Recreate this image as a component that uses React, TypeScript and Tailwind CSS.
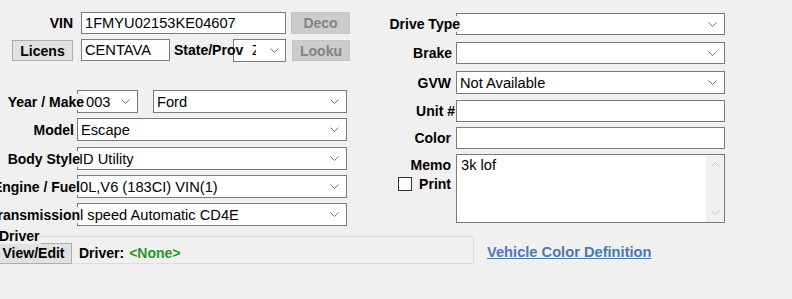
import React from "react";

const Chevron = (props: { up?: boolean; color?: string }) => (
  <svg width="9" height="5" viewBox="0 0 9 5" className="shrink-0">
    <polyline
      points={props.up ? "0.5,4.5 4.5,0.5 8.5,4.5" : "0.5,0.5 4.5,4.5 8.5,0.5"}
      fill="none"
      stroke={props.color || "#707070"}
      strokeWidth="1"
    />
  </svg>
);

const Select = (props: { text?: string; className: string; pad?: string }) => (
  <div
    className={`flex items-center bg-white border border-[#7a7a7a] ${props.className}`}
  >
    <span className={`flex-1 whitespace-nowrap overflow-hidden text-black ${props.pad || "pl-[3px]"}`}>
      {props.text}
    </span>
    <span className="pr-[7px] flex items-center">
      <Chevron />
    </span>
  </div>
);

const Field = (props: { text?: string; className: string }) => (
  <div
    className={`flex items-center bg-white border border-[#7a7a7a] pl-[3px] whitespace-nowrap overflow-hidden ${props.className}`}
  >
    {props.text}
  </div>
);

const Label = (props: { text: string; className: string }) => (
  <div
    className={`relative z-10 flex justify-end overflow-hidden whitespace-nowrap font-bold text-[14px] h-[16px] leading-[16px] ${props.className}`}
  >
    <span className="bg-[#f0f0f0]">{props.text}</span>
  </div>
);

export default function App() {
  return (
    <div className="w-[792px] h-[299px] bg-[#f0f0f0] overflow-hidden text-[14.67px] text-black font-['Liberation_Sans',Arial,sans-serif]">
      <div className="flex">
        {/* left column */}
        <div className="w-[352px] pt-[12px]">
          <div className="flex items-center h-[22px]">
            <Label text="VIN" className="w-[73px]" />
            <Field text="1FMYU02153KE04607" className="ml-[8px] w-[205px] h-[22px]" />
            <button className="ml-[5px] w-[59px] h-[22px] bg-[#cccccc] border border-[#c4c4c4] font-bold text-[14px] text-[#838383]">
              Deco
            </button>
          </div>
          <div className="flex items-center mt-[5px] h-[22px]">
            <button className="ml-[12px] w-[61px] h-[21px] bg-[#e1e1e1] border border-[#adadad] font-bold text-[14px]">
              Licens
            </button>
            <Field text="CENTAVA" className="ml-[8px] w-[89px] h-[22px]" />
            <div className="relative z-10 ml-[4px] w-[59px] font-bold text-[14px] whitespace-nowrap h-[16px] leading-[16px]">
              State/Prov
            </div>
            <div className="flex items-center bg-white border border-[#7a7a7a] w-[53px] h-[23px]">
              <span className="ml-[18px] w-[4px] overflow-hidden">Z</span>
              <span className="ml-auto pr-[6px] flex items-center">
                <Chevron />
              </span>
            </div>
            <button className="ml-[6px] w-[58px] h-[21px] bg-[#cccccc] border border-[#c4c4c4] font-bold text-[14px] text-[#838383]">
              Looku
            </button>
          </div>

          <div className="flex items-center mt-[29px] h-[23px]">
            <Label text="Year / Make" className="w-[84px]" />
            <Select text="003" className="-ml-[7px] w-[61px] h-[23px]" pad="pl-[8px]" />
            <Select text="Ford" className="ml-[15px] w-[194px] h-[23px]" />
          </div>
          <div className="flex items-center mt-[5px] h-[23px]">
            <Label text="Model" className="w-[74px]" />
            <Select text="Escape" className="ml-[3px] w-[270px] h-[23px]" />
          </div>
          <div className="flex items-center mt-[6px] h-[23px]">
            <Label text="Body Style" className="w-[80px]" />
            <Select text="ID Utility" className="-ml-[3px] w-[270px] h-[23px]" pad="pl-[1px]" />
          </div>
          <div className="flex items-center mt-[5px] h-[23px]">
            <Label text="Engine / Fuel" className="w-[80px]" />
            <Select text="0L,V6 (183CI) VIN(1)" className="-ml-[3px] w-[270px] h-[23px]" pad="pl-[2px]" />
          </div>
          <div className="flex items-center mt-[5px] h-[23px]">
            <Label text="Transmission" className="w-[80px]" />
            <Select text="l speed Automatic CD4E" className="-ml-[3px] w-[270px] h-[23px]" pad="pl-[2px]" />
          </div>
        </div>

        {/* right column */}
        <div className="ml-[33px] w-[340px] pt-[13px]">
          <div className="flex items-center h-[22px]">
            <Label text="Drive Type" className="w-[75px]" />
            <Select className="-ml-[4px] w-[269px] h-[22px]" />
          </div>
          <div className="flex items-center mt-[7px] h-[22px]">
            <Label text="Brake" className="w-[67px]" />
            <Select className="ml-[4px] w-[269px] h-[22px]" />
          </div>
          <div className="flex items-center mt-[7px] h-[23px]">
            <Label text="GVW" className="w-[66px]" />
            <Select text="Not Available" className="ml-[5px] w-[269px] h-[23px]" />
          </div>
          <div className="flex items-center mt-[6px] h-[22px]">
            <Label text="Unit #" className="w-[70px]" />
            <Field className="ml-[1px] w-[269px] h-[22px]" />
          </div>
          <div className="flex items-center mt-[5px] h-[22px]">
            <Label text="Color" className="w-[66px]" />
            <Field className="ml-[5px] w-[269px] h-[22px]" />
          </div>
          <div className="flex mt-[5px] h-[69px]">
            <div className="w-[66px] flex flex-col items-end pt-[3px] text-[14px]">
              <div className="font-bold leading-[16px]">Memo</div>
              <div className="flex items-center mt-[3px] h-[16px]">
                <span className="w-[14px] h-[14px] bg-white border border-[#333333]"></span>
                <span className="ml-[7px] font-bold leading-[16px]">Print</span>
              </div>
            </div>
            <div className="ml-[5px] w-[269px] h-[69px] bg-white border border-[#7a7a7a] flex">
              <div className="flex-1 pl-[4px] pt-[2px] leading-[17px]">3k lof</div>
              <div className="w-[18px] bg-[#f0f0f0] flex flex-col items-center justify-between py-[7px]">
                <Chevron up color="#c0c0c0" />
                <Chevron color="#c0c0c0" />
              </div>
            </div>
          </div>
        </div>
      </div>

      {/* bottom */}
      <div className="flex mt-[10px]">
        <div className="relative -ml-[10px] w-[484px] h-[28px] border border-[#dcdcdc] flex items-center text-[14px]">
          <div className="absolute left-[8px] -top-[9px] font-bold leading-[16px] bg-[#f0f0f0] pr-[2px]">
            Driver
          </div>
          <button className="mt-[6px] w-[81px] h-[21px] bg-[#e1e1e1] border border-[#adadad] font-bold flex items-center justify-center pl-[4px]">
            View/Edit
          </button>
          <span className="ml-[7px] mt-[6px] font-bold">Driver:</span>
          <span className="ml-[5px] mt-[6px] font-bold text-[#1f9a1f]">&lt;None&gt;</span>
        </div>
        <a className="ml-[13px] mt-[8px] font-bold underline text-[#4a79b1] leading-[17px]">
          Vehicle Color Definition
        </a>
      </div>
    </div>
  );
}
